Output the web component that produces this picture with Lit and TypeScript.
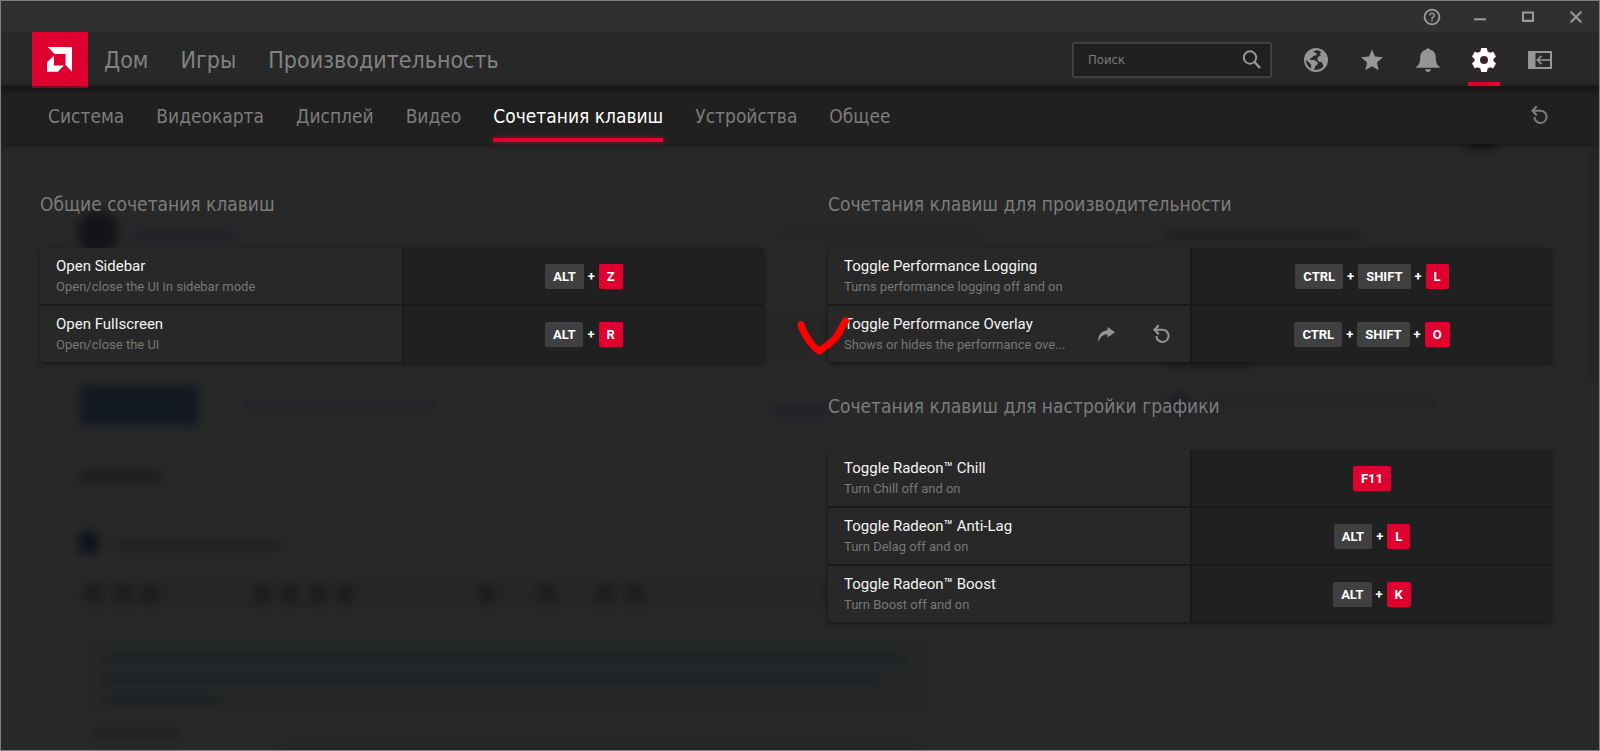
import { LitElement, html, css, svg, nothing, TemplateResult } from "lit";
import { customElement, state, property } from "lit/decorators.js";
import { classMap } from "lit/directives/class-map.js";

const icons = {
  help: svg`<path d="M11 18h2v-2h-2v2zm1-17C5.900 1 1 5.900 1 12s4.900 11 11 11 11-4.900 11-11S18.100 1 12 1zm0 19.600a8.600 8.600 0 1 1 0-17.200 8.600 8.600 0 0 1 0 17.200zM12 6c-2.210 0-4 1.790-4 4h2.200c0-1.100.8-1.900 1.800-1.900s1.800.8 1.800 1.900c0 1.800-2.900 1.750-2.900 5h2.200c0-2.250 2.900-2.500 2.900-5 0-2.210-1.790-4-4-4z"/>`,
  minimize: svg`<path d="M4 13.600h16v2.800H4z"/>`,
  maximize: svg`<path d="M4 4.500h16v14H4zM6.700 7.200v8.600h10.600V7.200z" fill-rule="evenodd"/>`,
  close: svg`<path d="M5 5l14 14M19 5L5 19" fill="none" stroke="currentColor" stroke-width="2.800"/>`,
  search: svg`<circle cx="10" cy="9.500" r="6.200" fill="none" stroke="currentColor" stroke-width="2"/><path d="M14.500 14l5.500 6" stroke="currentColor" stroke-width="2.400"/>`,
  globe: svg`<circle cx="12" cy="12" r="11" fill="none" stroke="currentColor" stroke-width="2"/>
    <path d="M2 8L6 3l5-2 1 1.500-3 1.200 2.500 1.100 1.700 1.400-1.700 1.300-2 .3-1.300 1.700-1.700.8-.6 1.200 1.700.5 2.200-.3 2.800 1.800 1.500 1.700-1 1.600-1.600 1.200-.7 2-1.600 2-1 1-1.200-3.500.2-2.500-2.200-2.500-2-2L1 12z"/>
    <path d="M14.500 2.500L18 3l3 3.500 2 4.500-.5 5-2 3-1.200.5-.3-3-1.500-2.500-2.500-.2-1.700-2 .5-2.300 1.700-1.500 1.700-.5-1.500-1.300.8-1.500 1.500-.7-1.700-.5z"/>`,
  star: svg`<path d="M12 1.500l3 7.100 8 .700-6.100 5.200 1.800 7.800L12 18.200l-6.700 4.100 1.800-7.800L1 9.300l8-.7z"/>`,
  bell: svg`<path d="M12 0.200c-.9 0-1.600.6-1.800 1.400C6.500 2.500 4.300 5.400 4.200 9.500c-.1 5-.9 7-3.900 9.500v.8h23.400V19c-3-2.500-3.800-4.500-3.900-9.500-.1-4.100-2.300-7-6-7.900C13.600.8 12.900.2 12 .2zM9 21.300c.3 1.600 1.500 2.600 3 2.600s2.700-1 3-2.600z"/>`,
  gear: svg`<path fill-rule="evenodd" d="M9.200 0h5.600l.8 3.500 2.300 1.300 3.400-1.100 2.700 4.700-2.600 2.500v2.200l2.600 2.500-2.700 4.700-3.400-1.100-2.300 1.300-.8 3.500H9.200l-.8-3.500-2.300-1.300-3.400 1.100L0 15.600l2.600-2.500v-2.200L0 8.400l2.700-4.700 3.400 1.100 2.300-1.300zM12 8a4 4 0 1 0 0 8 4 4 0 0 0 0-8z"/>`,
  sidebar: svg`<path fill-rule="evenodd" d="M0 3h24v18H0zM7.500 5v14H22V5z"/><path d="M22 12H9.500M13.500 7.800L9.300 12l4.200 4.200" fill="none" stroke="currentColor" stroke-width="1.700"/>`,
  reset: svg`<path d="M4.500 7.800h8a6.100 6.100 0 1 1-6.100 6.300" fill="none" stroke="currentColor" stroke-width="2"/><path d="M8.700 3.300L4.600 7.800l4.100 4.400" fill="none" stroke="currentColor" stroke-width="2.200"/>`,
  share: svg`<path d="M13.500 5L21 10.300l-7.500 5.200v-3.200C9 12.300 6 15 4.300 20.300 3.500 13.500 7 8.700 13.500 8.200z"/>`,
};

type IconName = keyof typeof icons;

@customElement("rs-icon")
export class RsIcon extends LitElement {
  @property() name: IconName = "help";
  static styles = css`
    :host { display: block; width: var(--icon-size, 24px); height: var(--icon-size, 24px); }
    svg { display: block; width: 100%; height: 100%; fill: currentColor; }
  `;
  render() {
    return html`<svg viewBox="0 0 24 24" aria-hidden="true">${icons[this.name]}</svg>`;
  }
}

interface Shortcut {
  title: string;
  note: string;
  keys: string[];
  editable?: boolean;
}

interface Group {
  heading: string;
  items: Shortcut[];
}

const columns: Group[][] = [
  [
    {
      heading: "Общие сочетания клавиш",
      items: [
        { title: "Open Sidebar", note: "Open/close the UI in sidebar mode", keys: ["ALT", "Z"] },
        { title: "Open Fullscreen", note: "Open/close the UI", keys: ["ALT", "R"] },
      ],
    },
  ],
  [
    {
      heading: "Сочетания клавиш для производительности",
      items: [
        { title: "Toggle Performance Logging", note: "Turns performance logging off and on", keys: ["CTRL", "SHIFT", "L"] },
        { title: "Toggle Performance Overlay", note: "Shows or hides the performance ove...", keys: ["CTRL", "SHIFT", "O"], editable: true },
      ],
    },
    {
      heading: "Сочетания клавиш для настройки графики",
      items: [
        { title: "Toggle Radeon™ Chill", note: "Turn Chill off and on", keys: ["F11"] },
        { title: "Toggle Radeon™ Anti-Lag", note: "Turn Delag off and on", keys: ["ALT", "L"] },
        { title: "Toggle Radeon™ Boost", note: "Turn Boost off and on", keys: ["ALT", "K"] },
      ],
    },
  ],
];

@customElement("shortcut-group")
export class ShortcutGroup extends LitElement {
  @property({ attribute: false }) group!: Group;

  static styles = css`
    :host { display: block; }
    h2 {
      margin: 0 0 32px;
      font: 400 19px/24px "DejaVu Sans Condensed", "DejaVu Sans", sans-serif;
      color: #7c7c7c;
    }
    .card {
      display: grid;
      gap: 2px;
      margin: 0;
      padding: 0;
      list-style: none;
      background: #1a1a1a;
      border-radius: 4px;
      box-shadow: 0 2px 5px rgba(0, 0, 0, 0.45);
    }
    .row {
      position: relative;
      display: grid;
      grid-template-columns: 50% minmax(0, 1fr);
      gap: 2px;
      min-height: 56px;
    }
    .info {
      display: flex;
      align-items: center;
      gap: 16px;
      padding: 0 16px;
      background: #282828;
    }
    .row:first-child .info { border-top-left-radius: 4px; }
    .row:last-child .info { border-bottom-left-radius: 4px; }
    .row:first-child .keys { border-top-right-radius: 4px; }
    .row:last-child .keys { border-bottom-right-radius: 4px; }
    .text { flex: 1; min-width: 0; padding-top: 2px; }
    .title, .note { overflow: hidden; text-overflow: ellipsis; white-space: nowrap; }
    .title { font-size: 15px; line-height: 20px; color: #f4f4f4; }
    .note { font-size: 13px; line-height: 22px; color: #777; }
    .actions { display: flex; gap: 32px; }
    button {
      border: 0;
      padding: 0;
      color: #969696;
      background: none;
      font: inherit;
      cursor: pointer;
    }
    .keys {
      display: flex;
      align-items: center;
      justify-content: center;
      gap: 4px;
      background: #202020;
      color: #fff;
      font-size: 13px;
      font-weight: 700;
    }
    kbd {
      padding: 0 8px;
      border-radius: 2px;
      background: #404040;
      font: inherit;
      line-height: 25px;
    }
    .main { background: #e0002f; }
    .mark {
      position: absolute;
      left: -32px;
      top: 10px;
      width: 56px;
      height: 42px;
      pointer-events: none;
    }
  `;

  private row(s: Shortcut): TemplateResult {
    return html`<li class="row">
      <div class="info">
        <div class="text">
          <div class="title">${s.title}</div>
          <div class="note">${s.note}</div>
        </div>
        ${s.editable
          ? html`<div class="actions">
              <button aria-label="Share"><rs-icon name="share"></rs-icon></button>
              <button aria-label="Reset"><rs-icon name="reset"></rs-icon></button>
            </div>`
          : nothing}
      </div>
      <button class="keys" aria-label=${`${s.title}: ${s.keys.join(" + ")}`}>
        ${s.keys.map(
          (k, i) => html`${i ? html`<span>+</span>` : nothing}<kbd class=${classMap({ main: i === s.keys.length - 1 })}>${k}</kbd>`
        )}
      </button>
      ${s.editable
        ? html`<svg class="mark" viewBox="0 0 56 42" aria-hidden="true">
            <path d="M5 8.500C6 14 9.500 19.500 14 26c3 4 6 7 9.300 9C28 31 34 28 39 22.500c4-4.500 6.500-11.500 10.500-17.500" fill="none" stroke="#f00" stroke-width="7" stroke-linecap="round" stroke-linejoin="round"/>
          </svg>`
        : nothing}
    </li>`;
  }

  render() {
    return html`<h2>${this.group.heading}</h2>
      <ul class="card">${this.group.items.map((s) => this.row(s))}</ul>`;
  }
}

@customElement("app-root")
export class AppRoot extends LitElement {
  @state() private tab = "Сочетания клавиш";

  static styles = css`
    :host {
      position: relative;
      isolation: isolate;
      display: flex;
      flex-direction: column;
      box-sizing: border-box;
      min-height: 100vh;
      border: 1px solid #808080;
      background: #282828;
      color: #7c7c7c;
      overflow: hidden;
      font-family: Roboto, "Noto Sans", sans-serif;
    }
    button {
      display: block;
      border: 0;
      padding: 0;
      background: none;
      color: inherit;
      font: inherit;
      cursor: pointer;
    }
    a { color: inherit; text-decoration: none; }
    .titlebar {
      display: flex;
      justify-content: flex-end;
      align-items: center;
      gap: 30px;
      height: 31px;
      padding: 0 14px;
      background: #303030;
      color: #999;
      --icon-size: 18px;
    }
    .navbar {
      display: flex;
      height: 54px;
      padding: 0 47px 0 31px;
      background: #282828;
    }
    .logo {
      z-index: 1;
      box-sizing: border-box;
      width: 56px;
      height: 56px;
      border-bottom: 2px solid #82061f;
      background: #e0002f;
    }
    .logo svg { display: block; width: 56px; height: 54px; }
    .links {
      flex: 1;
      display: flex;
      align-items: center;
      gap: 32px;
      padding: 2px 0 0 16px;
      font: 400 23px/32px "DejaVu Sans Condensed", "DejaVu Sans", sans-serif;
      color: #828282;
    }
    .tools {
      display: flex;
      align-items: center;
      gap: 32px;
      padding-top: 2px;
      color: #969696;
    }
    .search {
      display: flex;
      align-items: center;
      box-sizing: border-box;
      width: 200px;
      height: 36px;
      padding: 0 6px 0 14px;
      border: 2px solid #404040;
      border-radius: 2px;
      background: #202020;
    }
    .search input {
      flex: 1;
      min-width: 0;
      padding: 0;
      border: 0;
      outline: 0;
      background: none;
      color: #ddd;
      font: 400 13px/20px "DejaVu Sans Condensed", "DejaVu Sans", sans-serif;
    }
    .search input::placeholder { color: #7c7c7c; opacity: 1; }
    .tool {
      display: flex;
      align-items: center;
      height: 52px;
    }
    .tool.active {
      justify-content: center;
      width: 32px;
      margin: 0 -4px;
      color: #fff;
      background: linear-gradient(#e0002f, #e0002f) bottom / 100% 4px no-repeat;
      filter: drop-shadow(0 0 2px rgba(224, 0, 47, 0.3));
    }
    .subnav {
      display: flex;
      justify-content: space-between;
      align-items: center;
      height: 58px;
      padding: 0 47px;
      background: linear-gradient(#131313, #202020 8px);
      box-shadow: 0 1px 5px rgba(0, 0, 0, 0.5);
    }
    .tabs {
      display: flex;
      gap: 32px;
      font: 400 19px/58px "DejaVu Sans Condensed", "DejaVu Sans", sans-serif;
    }
    .tab {
      position: relative;
      padding-top: 2px;
      line-height: 56px;
      color: #7c7c7c;
    }
    .tab.active { color: #fff; }
    .tab.active::after {
      content: "";
      position: absolute;
      left: 0;
      right: 0;
      bottom: 2px;
      height: 4px;
      background: #e0002f;
      box-shadow: 0 0 5px rgba(224, 0, 47, 0.7);
    }
    .content {
      display: grid;
      grid-template-columns: minmax(0, 1fr) minmax(0, 1fr);
      align-items: start;
      gap: 64px;
      padding: 48px 47px 48px 39px;
    }
    .column { display: grid; gap: 32px; }
    .backdrop {
      position: absolute;
      z-index: -1;
      left: 0;
      top: 0;
      width: 1598px;
      height: 749px;
    }
  `;

  private backdrop() {
    const glyphs = [93, 123, 150, 262, 290, 318, 345, 487, 547, 605, 635];
    return html`<svg class="backdrop" viewBox="1 1 1598 749" aria-hidden="true">
      <defs>
        <filter id="soft" x="0" y="0" width="100%" height="100%" color-interpolation-filters="sRGB">
          <feGaussianBlur stdDeviation="5"/>
        </filter>
      </defs>
      <g filter="url(#soft)">
        <rect x="-20" y="-20" width="1640" height="791" fill="#282828"/>
        <circle cx="98" cy="232" r="21" fill="#121419"/>
        <rect x="134" y="230" width="98" height="12" fill="#1f2228"/>
        <rect x="80" y="386" width="118" height="40" fill="#121822"/>
        <rect x="240" y="400" width="200" height="9" fill="#212429"/>
        <rect x="770" y="405" width="60" height="10" fill="#1f222a"/>
        <rect x="780" y="230" width="200" height="10" fill="#252525"/>
        <rect x="766" y="312" width="64" height="42" fill="#252525"/>
        <rect x="1166" y="229" width="194" height="12" fill="#202020"/>
        <rect x="1170" y="358" width="80" height="12" fill="#202020"/>
        <rect x="1169" y="394" width="20" height="20" fill="#191e28"/>
        <rect x="1200" y="399" width="240" height="9" fill="#232426"/>
        <rect x="1466" y="136" width="30" height="14" fill="#181816"/>
        <rect x="80" y="470" width="82" height="14" fill="#1e1e1e"/>
        <rect x="79" y="532" width="19" height="21" fill="#0c131f"/>
        <rect x="112" y="540" width="172" height="10" fill="#212121"/>
        <rect x="80" y="579" width="845" height="30" fill="#252525"/>
        ${glyphs.map((x) => svg`<rect x=${x - 7} y="586" width="14" height="16" fill="#1b1b1b"/>`)}
        <rect x="90" y="642" width="835" height="68" fill="#242627"/>
        <rect x="104" y="654" width="800" height="8" fill="#1e2124"/>
        <rect x="104" y="675" width="780" height="8" fill="#1e2124"/>
        <rect x="104" y="696" width="116" height="8" fill="#1e2124"/>
        <rect x="92" y="729" width="88" height="10" fill="#202020"/>
        <rect x="280" y="745" width="640" height="8" fill="#222"/>
        <rect x="1588" y="150" width="12" height="230" fill="#242424"/>
      </g>
    </svg>`;
  }

  render() {
    const tabs = ["Система", "Видеокарта", "Дисплей", "Видео", "Сочетания клавиш", "Устройства", "Общее"];
    const windowButtons: [IconName, string][] = [
      ["help", "Справка"],
      ["minimize", "Свернуть"],
      ["maximize", "Развернуть"],
      ["close", "Закрыть"],
    ];
    const tools: [IconName, string][] = [
      ["globe", "Интернет"],
      ["star", "Избранное"],
      ["bell", "Уведомления"],
      ["gear", "Настройки"],
      ["sidebar", "Боковая панель"],
    ];
    return html`
      ${this.backdrop()}
      <div class="titlebar">
        ${windowButtons.map(([icon, label]) => html`<button aria-label=${label}><rs-icon name=${icon}></rs-icon></button>`)}
      </div>
      <header class="navbar">
        <a class="logo" href="#" aria-label="AMD Radeon">
          <svg viewBox="0 0 56 54" fill="#fff" aria-hidden="true">
            <path d="M15.800 15H40v24.800l-6.500-6.800V22H22.500z"/>
            <path d="M22 23.500v10h10l-6.200 6.300H15V30.200z"/>
          </svg>
        </a>
        <nav class="links">
          <a href="#">Дом</a><a href="#">Игры</a><a href="#">Производительность</a>
        </nav>
        <div class="tools">
          <label class="search">
            <input type="text" placeholder="Поиск" aria-label="Поиск" />
            <rs-icon name="search"></rs-icon>
          </label>
          ${tools.map(
            ([icon, label]) => html`<button class=${classMap({ tool: true, active: icon === "gear" })} aria-label=${label}>
              <rs-icon name=${icon}></rs-icon>
            </button>`
          )}
        </div>
      </header>
      <div class="subnav">
        <nav class="tabs">
          ${tabs.map(
            (t) => html`<button class=${classMap({ tab: true, active: t === this.tab })} @click=${() => (this.tab = t)}>${t}</button>`
          )}
        </nav>
        <button aria-label="Сбросить"><rs-icon name="reset"></rs-icon></button>
      </div>
      <main class="content">
        ${columns.map(
          (groups) => html`<div class="column">
            ${groups.map((g) => html`<shortcut-group .group=${g}></shortcut-group>`)}
          </div>`
        )}
      </main>
    `;
  }
}
